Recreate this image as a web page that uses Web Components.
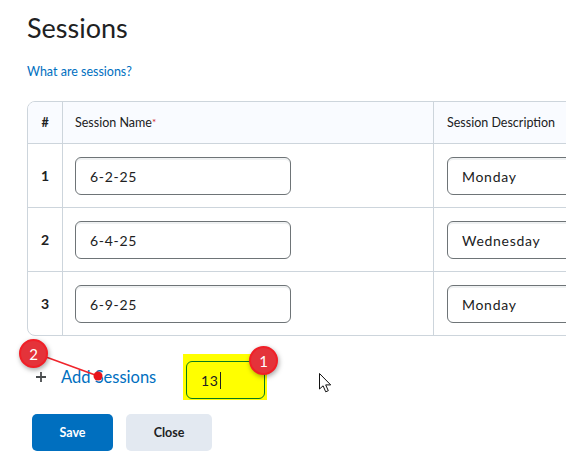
<!DOCTYPE html>
<html>
<head>
<meta charset="utf-8">
<title>Sessions</title>
<style>
  html, body { margin: 0; height: 100%; background: #fff; overflow: hidden; }
  body { font-family: Lato, "Open Sans", sans-serif; color: #202122; }
</style>
</head>
<body>
<template id="session-row-tpl">
  <style>
    :host { display: grid; grid-template-columns: 35px 371px 300px; height: 63px; border-top: 1px solid #cdd5dc; box-sizing: content-box; }
    .num { display: flex; align-items: center; justify-content: center; font-size: 14px; font-weight: 700; border-right: 1px solid #cdd5dc; }
    .cell { padding: 13px 0 0 12px; border-right: 1px solid #cdd5dc; }
    .cell.wide { padding-left: 13px; border-right: 0; }
  </style>
  <div class="num"></div>
  <div class="cell"><text-field class="name" style="--w:216px"></text-field></div>
  <div class="cell wide"><text-field class="desc" style="--w:240px"></text-field></div>
</template>
<script>
  class TextField extends HTMLElement {
    constructor() {
      super();
      this.attachShadow({ mode: "open" });
      this.shadowRoot.innerHTML = `
        <style>
          :host { display: block; width: var(--w, 216px); }
          .box {
            box-sizing: border-box; height: 38px; padding: 0 14px;
            display: flex; align-items: center;
            border: 1px solid var(--field-border, #6e7477); border-radius: 6px;
            background: var(--field-bg, #fff);
            box-shadow: inset 0 2px 0 0 var(--field-shadow, rgba(177,185,190,.2));
            font-size: 14px; letter-spacing: .7px; color: #202122;
          }
          .caret { width: 1px; height: 17px; background: #202122; margin-left: 1px; display: var(--caret, none); }
        </style>
        <div class="box"><span><slot></slot></span><i class="caret"></i></div>`;
    }
  }
  customElements.define("text-field", TextField);

  class SessionRow extends HTMLElement {
    constructor() {
      super();
      this.attachShadow({ mode: "open" });
      this.shadowRoot.appendChild(document.getElementById("session-row-tpl").content.cloneNode(true));
    }
    connectedCallback() {
      this.shadowRoot.querySelector(".num").textContent = this.getAttribute("num");
      this.shadowRoot.querySelector(".name").textContent = this.getAttribute("name");
      this.shadowRoot.querySelector(".desc").textContent = this.getAttribute("desc");
    }
  }
  customElements.define("session-row", SessionRow);

  class SessionTable extends HTMLElement {
    constructor() {
      super();
      this.attachShadow({ mode: "open" });
      this.shadowRoot.innerHTML = `
        <style>
          :host { display: block; width: 708px; box-sizing: border-box; border: 1px solid #cdd5dc; border-radius: 8px; overflow: hidden; }
          .head { display: grid; grid-template-columns: 35px 371px 300px; height: 41px; background: #f9fbff; font-size: 12.5px; color: #202122; }
          .head div { display: flex; align-items: center; padding-left: 12px; border-right: 1px solid #cdd5dc; }
          .head .hash { padding: 0; justify-content: center; font-weight: 700; }
          .head .last { padding-left: 13px; border-right: 0; }
          sup { color: #cd2026; font-size: 10px; line-height: 0; position: relative; top: -1px; vertical-align: super; }
        </style>
        <div class="head">
          <div class="hash">#</div>
          <div>Session Name<sup>*</sup></div>
          <div class="last">Session Description</div>
        </div>
        <slot></slot>`;
    }
  }
  customElements.define("session-table", SessionTable);

  class PlainButton extends HTMLElement {
    constructor() {
      super();
      this.attachShadow({ mode: "open" });
      this.shadowRoot.innerHTML = `
        <style>
          :host { display: inline-flex; align-items: center; justify-content: center; height: 37px; border-radius: 5px; font-size: 12.5px; font-weight: 700; background: #e3e9f1; color: #202122; }
          :host([primary]) { background: #006fbf; color: #fff; }
        </style>
        <slot></slot>`;
    }
  }
  customElements.define("plain-button", PlainButton);

  class StepBadge extends HTMLElement {
    constructor() {
      super();
      this.attachShadow({ mode: "open" });
      this.shadowRoot.innerHTML = `
        <style>
          :host {
            position: absolute; width: 29px; height: 29px; box-sizing: border-box;
            display: flex; align-items: center; justify-content: center;
            border-radius: 50%; background: #e4333a; border: 2px solid #f11f27;
            color: #fff; font-size: 15px;
            box-shadow: 1px 2px 5px rgba(0,0,0,.35);
          }
        </style>
        <slot></slot>`;
    }
  }
  customElements.define("step-badge", StepBadge);

  class SessionsPage extends HTMLElement {
    constructor() {
      super();
      this.attachShadow({ mode: "open" });
      this.shadowRoot.innerHTML = `
        <style>
          :host { display: block; position: relative; width: 566px; height: 468px; overflow: hidden; box-sizing: border-box; padding: 11px 0 0 27px; }
          h1 { margin: 0; font-size: 27px; font-weight: 400; line-height: 34px; color: #202122; }
          a { display: block; margin-top: 18px; font-size: 12.5px; line-height: 18px; color: #006fbf; text-decoration: none; }
          .tbl { margin-top: 20px; }
          .add { display: flex; align-items: center; margin: 18px 0 0 8px; height: 46px; }
          .plus { width: 12px; height: 12px; margin-right: 14px; }
          .add a { margin: 0; font-size: 16.5px; width: 122px; }
          .hl { box-sizing: border-box; width: 84px; height: 46px; background: #ff0; padding: 7px 2px 1px 3px; --field-border: #0a7a1e; --field-bg: #ff0; --field-shadow: transparent; --caret: block; --w: 79px; }
          .btns { display: flex; gap: 13px; margin: 14px 0 0 5px; }
          .save { width: 81px; }
          .close { width: 86px; }
          svg.over { position: absolute; left: 0; top: 0; pointer-events: none; }
        </style>
        <h1>Sessions</h1>
        <a href="#">What are sessions?</a>
        <session-table class="tbl"><slot></slot></session-table>
        <div class="add">
          <svg class="plus" viewBox="0 0 12 12"><path d="M6 1v10M1 6h10" stroke="#494c4e" stroke-width="1.8" fill="none"/></svg>
          <a href="#">Add Sessions</a>
          <div class="hl"><text-field>13</text-field></div>
        </div>
        <div class="btns">
          <plain-button class="save" primary>Save</plain-button>
          <plain-button class="close">Close</plain-button>
        </div>
        <svg class="over" width="566" height="468" viewBox="0 0 566 468">
          <line x1="46" y1="357" x2="98" y2="376" stroke="#f0252c" stroke-width="1.6"/>
          <circle cx="98" cy="376" r="4.5" fill="#e8141c"/>
          <path d="M319.5 373.5v15.5l3.6-3.2 2.6 6 2.6-1.1-2.6-5.8h5z" fill="#fff" stroke="#111" stroke-width="1"/>
        </svg>
        <step-badge style="left:19px;top:339px">2</step-badge>
        <step-badge style="left:249px;top:346px">1</step-badge>`;
    }
  }
  customElements.define("sessions-page", SessionsPage);
</script>
<sessions-page>
  <session-row num="1" name="6-2-25" desc="Monday"></session-row>
  <session-row num="2" name="6-4-25" desc="Wednesday"></session-row>
  <session-row num="3" name="6-9-25" desc="Monday"></session-row>
</sessions-page>
</body>
</html>
